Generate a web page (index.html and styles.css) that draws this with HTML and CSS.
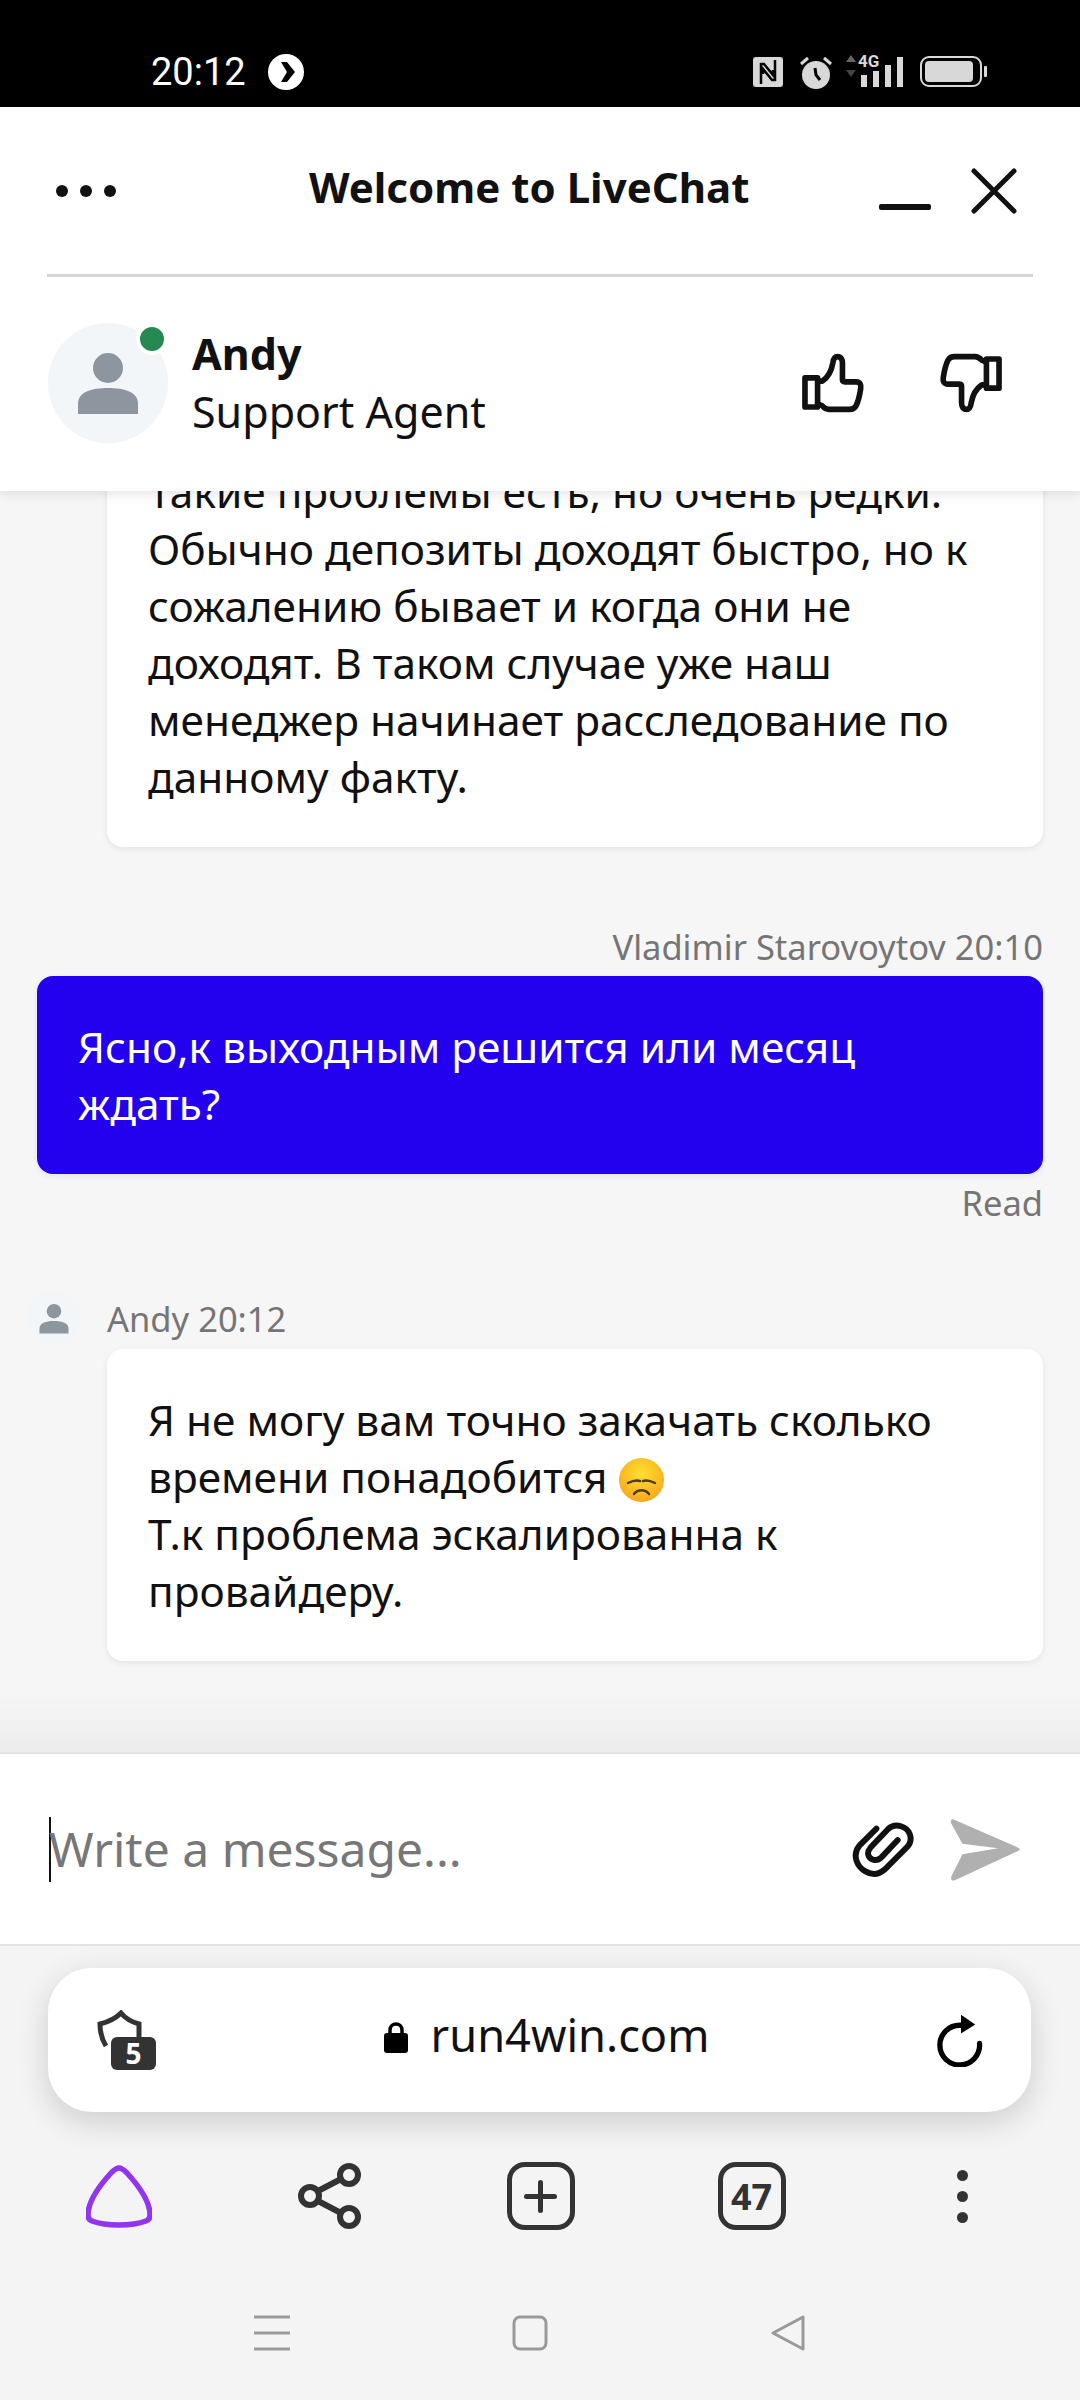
FILE: index.html
```html
<!DOCTYPE html>
<html lang="ru">
<head>
  <meta charset="UTF-8">
  <meta name="viewport" content="width=device-width, initial-scale=1.0">
  <title>LiveChat</title>
  <link rel="stylesheet" href="styles.css">
</head>
<body>

  <div class="status-bar">
    <div class="status-left">
      <span class="status-time">20:12</span>
      <svg class="status-arrow" width="36" height="36" viewBox="0 0 36 36">
        <circle cx="18" cy="18" r="18" fill="#fff"/>
        <path d="M13 8h6l8 10-8 10h-6l6-10z" fill="#000"/>
      </svg>
    </div>
    <div class="status-right">
      <svg width="30" height="30" viewBox="0 0 30 30">
        <rect width="30" height="30" rx="3" fill="#d8d8d8"/>
        <path d="M8 27V7h3l9 11v-5M22 3v20h-3l-9-11v5" fill="none" stroke="#000" stroke-width="2.500"/>
      </svg>
      <svg width="32" height="34" viewBox="0 0 32 34">
        <circle cx="16" cy="20" r="14" fill="#d8d8d8"/>
        <path d="M1 9l7-6M31 9l-7-6" stroke="#d8d8d8" stroke-width="3"/>
        <path d="M15 13l1 7 4 5" fill="none" stroke="#000" stroke-width="3"/>
      </svg>
      <div class="signal">
        <svg class="signal-arrows" width="12" height="24" viewBox="0 0 12 24">
          <path d="M6 0l5 7H1z" fill="#666"/>
          <path d="M6 22L1 15h10z" fill="#444"/>
        </svg>
        <span class="signal-type">4G</span>
        <svg class="signal-bars" width="42" height="30" viewBox="0 0 42 30">
          <rect x="0" y="18" width="6" height="12" fill="#d8d8d8"/>
          <rect x="12" y="14" width="6" height="16" fill="#d8d8d8"/>
          <rect x="24" y="8" width="6" height="22" fill="#d8d8d8"/>
          <rect x="36" y="0" width="6" height="30" fill="#d8d8d8"/>
        </svg>
      </div>
      <svg width="67" height="31" viewBox="0 0 67 31">
        <rect x="1" y="1" width="60" height="29" rx="8" fill="none" stroke="#d8d8d8" stroke-width="2"/>
        <rect x="5" y="5" width="48" height="21" rx="4" fill="#d8d8d8"/>
        <rect x="64" y="10" width="3" height="11" rx="1" fill="#d8d8d8"/>
      </svg>
    </div>
  </div>

  <header class="chat-header">
    <div class="title-row">
      <div class="more-dots"><span></span><span></span><span></span></div>
      <h1>Welcome to LiveChat</h1>
      <div class="window-btns">
        <span class="minimize"></span>
        <svg width="46" height="46" viewBox="0 0 46 46">
          <path d="M3 3l40 40M43 3L3 43" stroke="#111" stroke-width="5" stroke-linecap="round"/>
        </svg>
      </div>
    </div>
    <div class="agent-row">
      <div class="avatar">
        <svg width="62" height="62" viewBox="0 0 62 62">
          <ellipse cx="31" cy="16" rx="15" ry="15" fill="#8d969e"/>
          <path d="M1 62V52C1 40 14 36 31 36s30 4 30 16v10z" fill="#8d969e"/>
        </svg>
        <span class="online-dot"></span>
      </div>
      <div class="agent-info">
        <div class="agent-name">Andy</div>
        <div class="agent-role">Support Agent</div>
      </div>
      <div class="rate-btns">
        <svg width="68" height="62" viewBox="115 95 205 185">
          <g fill="none" stroke="#111" stroke-width="17" stroke-linejoin="round">
            <rect x="133" y="172" width="38" height="88"/>
            <path d="M171 182h14c15-10 28-32 32-55 2-14 8-19 14-19 10 0 15 8 15 20v50c0 4 3 6 8 6h33c12 0 16 8 14 20-3 20-7 38-14 52-4 8-10 11-20 11h-62c-8 0-14-4-20-11l-14-6"/>
          </g>
        </svg>
        <svg width="68" height="62" viewBox="115 95 205 185">
          <g fill="none" stroke="#111" stroke-width="17" stroke-linejoin="round" transform="rotate(180 217.500 187.500)">
            <rect x="133" y="172" width="38" height="88"/>
            <path d="M171 182h14c15-10 28-32 32-55 2-14 8-19 14-19 10 0 15 8 15 20v50c0 4 3 6 8 6h33c12 0 16 8 14 20-3 20-7 38-14 52-4 8-10 11-20 11h-62c-8 0-14-4-20-11l-14-6"/>
          </g>
        </svg>
      </div>
    </div>
  </header>

  <main class="chat">
    <div class="bubble bubble-in">
      Такие проблемы есть, но очень редки.<br>
      Обычно депозиты доходят быстро, но к сожалению бывает и когда они не доходят. В таком случае уже наш менеджер начинает расследование по данному факту.
    </div>

    <div class="msg-meta meta-out">Vladimir Starovoytov 20:10</div>
    <div class="bubble bubble-out">Ясно,к выходным решится или месяц ждать?</div>
    <div class="msg-read">Read</div>

    <div class="msg-author">
      <div class="mini-avatar">
        <svg width="30" height="31" viewBox="0 0 62 62">
          <ellipse cx="31" cy="16" rx="15" ry="15" fill="#8d969e"/>
          <path d="M1 62V52C1 40 14 36 31 36s30 4 30 16v10z" fill="#8d969e"/>
        </svg>
      </div>
      <span class="msg-meta">Andy 20:12</span>
    </div>
    <div class="bubble bubble-in">
      Я не могу вам точно закачать сколько времени понадобится
      <svg class="emoji" width="45" height="44" viewBox="0 0 45 44">
        <defs>
          <radialGradient id="emojiFace" cx="50%" cy="35%" r="65%">
            <stop offset="0%" stop-color="#fde02f"/>
            <stop offset="100%" stop-color="#f7a81e"/>
          </radialGradient>
        </defs>
        <ellipse cx="22.500" cy="22" rx="22.500" ry="22" fill="url(#emojiFace)"/>
        <path d="M9 25c4-2 9-3 12-2M24 23c3-1 8 0 12 2M15 36c4-5 11-5 15 0" fill="none" stroke="#4e3a1e" stroke-width="2.400" stroke-linecap="round"/>
      </svg><br>
      Т.к проблема эскалированна к провайдеру.
    </div>
  </main>

  <div class="composer">
    <span class="caret"></span>
    <span class="placeholder">Write a message...</span>
    <svg class="clip" width="66" height="58" viewBox="30 50 200 177">
      <path d="M110 70L58 122C35 150 50 185 75 200 100 215 120 208 135 195L205 125C225 100 210 70 185 63 170 58 155 62 145 72L92 128C78 145 85 160 100 165 110 168 118 165 125 158L175 105" fill="none" stroke="#111" stroke-width="18" stroke-linecap="round"/>
    </svg>
    <svg width="72" height="65" viewBox="328 38 215 195">
      <path d="M340 45L535 130Q545 135 535 140L345 228Q330 232 335 215L368 150 475 132 368 118 333 55Q332 42 340 45z" fill="#b0b0b0"/>
    </svg>
  </div>

  <div class="browser">
    <div class="url-bar">
      <div class="shield">
        <svg width="48" height="40" viewBox="0 0 48 40">
          <path d="M10 36C5 28 4 20 4 14 12 12 20 8 25 3 29 8 36 12 43 14v14" fill="none" stroke="#333" stroke-width="5"/>
        </svg>
        <span class="shield-count">5</span>
      </div>
      <div class="url-text">
        <svg width="24" height="31" viewBox="0 0 24 31">
          <path d="M6 13V8c0-8 12-8 12 0v5" fill="none" stroke="#000" stroke-width="3.500"/>
          <rect y="11" width="24" height="20" rx="3"/>
        </svg>
        <span class="url-host">run4win.com</span>
      </div>
      <svg width="46" height="53" viewBox="50 38 138 160">
        <path d="M178 127A60 60 0 1 1 120 72" fill="none" stroke="#000" stroke-width="16" stroke-linecap="round"/>
        <path d="M122 40L165 70 122 97z" fill="#000"/>
      </svg>
    </div>

    <div class="toolbar">
      <div class="tool-cell">
        <svg width="66" height="63" viewBox="0 0 66 63">
          <path d="M33 3c3 0 5 2 8 5C52 20 64 37 64 50c0 3-1 5-4 6-8 3-17 4-27 4S14 59 6 56c-3-1-4-3-4-6C2 37 14 20 25 8c3-3 5-5 8-5z" fill="none" stroke="#9334f0" stroke-width="5.500" stroke-linejoin="round"/>
        </svg>
      </div>
      <div class="tool-cell">
        <svg width="64" height="66" viewBox="0 0 64 66">
          <g fill="none" stroke="#333" stroke-width="6">
            <circle cx="51" cy="12" r="9"/>
            <circle cx="12" cy="33" r="9"/>
            <circle cx="51" cy="54" r="9"/>
            <path d="M20 28l23-12M20 38l23 12"/>
          </g>
        </svg>
      </div>
      <div class="tool-cell">
        <div class="tool-box"><span class="tool-plus"></span></div>
      </div>
      <div class="tool-cell">
        <div class="tool-box">47</div>
      </div>
      <div class="tool-cell">
        <div class="tool-dots"><span></span><span></span><span></span></div>
      </div>
    </div>

    <nav class="nav-bar">
      <svg width="36" height="36" viewBox="0 0 36 36">
        <path d="M0 2h36M0 18h36M0 34h36" stroke="#999" stroke-width="3"/>
      </svg>
      <svg width="36" height="36" viewBox="0 0 36 36">
        <rect x="2" y="2" width="32" height="32" rx="6" fill="none" stroke="#999" stroke-width="3"/>
      </svg>
      <svg width="36" height="36" viewBox="0 0 36 36">
        <path d="M33 2v32L3 18z" fill="none" stroke="#999" stroke-width="3" stroke-linejoin="round"/>
      </svg>
    </nav>
  </div>

</body>
</html>
```

FILE: styles.css
```css
* {
  box-sizing: border-box;
  margin: 0;
  padding: 0;
}

body {
  width: 1080px;
  height: 2400px;
  display: flex;
  flex-direction: column;
  overflow: hidden;
  font-family: 'Noto Sans', sans-serif;
  color: #111;
  background-color: #f4f4f4;
}

/* Phone status bar */
.status-bar {
  height: 107px;
  flex: none;
  display: flex;
  justify-content: space-between;
  align-items: center;
  padding: 36px 93px 0 151px;
  background-color: #000;
  color: #fff;
}

.status-left {
  display: flex;
  align-items: center;
  gap: 22px;
}

.status-time {
  font-family: 'Roboto', sans-serif;
  font-size: 38px;
}

.status-right {
  display: flex;
  align-items: center;
  gap: 17px;
}

.signal {
  position: relative;
  width: 58px;
  height: 34px;
  margin-left: -4px;
}

.signal-arrows {
  position: absolute;
  left: 0;
  top: 0;
}

.signal-type {
  position: absolute;
  left: 13px;
  top: -4px;
  font-family: 'Roboto', sans-serif;
  font-size: 17px;
  font-weight: bold;
  color: #d8d8d8;
}

.signal-bars {
  position: absolute;
  left: 16px;
  top: 2px;
}

/* Chat header */
.chat-header {
  flex: none;
  height: 384px;
  position: relative;
  z-index: 2;
  padding: 0 47px;
  background-color: #fff;
  box-shadow: 0 2px 12px rgba(0, 0, 0, 0.12);
}

.title-row {
  height: 170px;
  display: flex;
  align-items: center;
  justify-content: space-between;
  border-bottom: 3px solid #d5d5d5;
}

.title-row h1 {
  position: absolute;
  left: 309px;
  margin-bottom: 8px;
  font-size: 42px;
  font-weight: bold;
}

.more-dots {
  display: flex;
  gap: 12px;
  margin-left: 9px;
}

.more-dots span {
  width: 12px;
  height: 12px;
  border-radius: 50%;
  background-color: #111;
}

.window-btns {
  display: flex;
  align-items: center;
  gap: 40px;
  margin-right: 16px;
}

.minimize {
  width: 52px;
  height: 6px;
  margin-top: 32px;
  border-radius: 2px;
  background-color: #111;
}

.agent-row {
  display: flex;
  align-items: center;
  height: 212px;
  padding-left: 1px;
}

.avatar {
  position: relative;
  width: 120px;
  height: 120px;
  display: flex;
  align-items: center;
  justify-content: center;
  border-radius: 50%;
  background-color: #f2f6f9;
}

.online-dot {
  position: absolute;
  top: 0;
  right: 0;
  width: 32px;
  height: 32px;
  border: 4px solid #fff;
  border-radius: 50%;
  background-color: #248a52;
}

.agent-info {
  flex: 1;
  margin-left: 24px;
}

.agent-name {
  font-size: 43px;
  font-weight: bold;
  line-height: 58px;
}

.agent-role {
  font-size: 43px;
  line-height: 58px;
}

.rate-btns {
  display: flex;
  gap: 70px;
  margin-right: 28px;
}

/* Messages */
.chat {
  flex: 1;
  min-height: 0;
  position: relative;
  display: flex;
  flex-direction: column;
  justify-content: flex-end;
  overflow: hidden;
  padding: 0 37px 91px;
  background-color: #f6f6f6;
}

.chat::after {
  content: "";
  position: absolute;
  left: 0;
  right: 0;
  bottom: 0;
  height: 60px;
  background: linear-gradient(rgba(0, 0, 0, 0), rgba(0, 0, 0, 0.04));
}

.bubble {
  flex: none;
  padding: 42px 42px 42px 41px;
  font-size: 42.4px;
  line-height: 57px;
  border-radius: 16px;
  box-shadow: 0 2px 6px rgba(0, 0, 0, 0.08);
}

.bubble-in {
  margin-left: 70px;
  background-color: #fff;
}

.bubble-out {
  color: #fff;
  background-color: #2300ee;
}

.msg-meta {
  font-size: 34.5px;
  line-height: 46px;
  color: #757575;
}

.meta-out {
  flex: none;
  margin-top: 77px;
  margin-bottom: 6px;
  text-align: right;
}

.msg-read {
  flex: none;
  margin-top: 6px;
  font-size: 34.5px;
  line-height: 46px;
  text-align: right;
  color: #757575;
}

.msg-author {
  flex: none;
  display: flex;
  align-items: center;
  margin: 65px 0 4px -10px;
}

.msg-author .msg-meta {
  margin-top: 2px;
}

.mini-avatar {
  width: 54px;
  height: 54px;
  margin-right: 26px;
  display: flex;
  align-items: center;
  justify-content: center;
  border-radius: 50%;
  background-color: #f2f6f9;
}

.emoji {
  vertical-align: -9px;
}

/* Message input */
.composer {
  flex: none;
  height: 194px;
  display: flex;
  align-items: center;
  padding: 0 59px 0 49px;
  background-color: #fff;
  border-top: 2px solid #e3e3e3;
  border-bottom: 2px solid #e3e3e3;
}

.caret {
  width: 2px;
  height: 65px;
  background-color: #111;
}

.placeholder {
  flex: 1;
  margin-left: -2px;
  margin-bottom: 2px;
  font-size: 48px;
  color: #777;
}

.clip {
  margin-top: 3px;
  margin-right: 33px;
}

/* Browser chrome */
.browser {
  flex: none;
  height: 454px;
  padding: 22px 49px 0 48px;
}

.url-bar {
  height: 144px;
  display: flex;
  align-items: center;
  justify-content: space-between;
  padding: 0 48px;
  border-radius: 44px;
  background-color: #fff;
  box-shadow: 0 10px 32px rgba(0, 0, 0, 0.16);
}

.shield {
  position: relative;
  width: 60px;
  height: 60px;
}

.shield-count {
  position: absolute;
  right: 0;
  bottom: 0;
  width: 45px;
  height: 33px;
  border-radius: 6px;
  text-align: center;
  font-size: 28px;
  font-weight: bold;
  line-height: 33px;
  color: #fff;
  background-color: #333;
}

.url-text {
  display: flex;
  align-items: center;
  gap: 23px;
  margin-bottom: 6px;
  font-size: 45.2px;
  color: #111;
}

.url-host {
  margin-bottom: 6px;
}

.toolbar {
  height: 168px;
  display: grid;
  grid-template-columns: repeat(5, 211px);
  align-items: center;
  justify-items: center;
  margin-left: -35px;
}

.tool-cell {
  display: flex;
  align-items: center;
  justify-content: center;
}

.tool-box {
  width: 68px;
  height: 68px;
  display: flex;
  align-items: center;
  justify-content: center;
  border: 5px solid #333;
  border-radius: 18px;
  font-size: 36px;
  font-weight: bold;
  color: #333;
}

.tool-plus {
  position: relative;
  width: 33px;
  height: 5px;
  border-radius: 3px;
  background-color: #333;
}

.tool-plus::after {
  content: "";
  position: absolute;
  left: 14px;
  top: -14px;
  width: 5px;
  height: 33px;
  border-radius: 3px;
  background-color: #333;
}

.tool-dots {
  display: flex;
  flex-direction: column;
  gap: 10px;
}

.tool-dots span {
  width: 11px;
  height: 11px;
  border-radius: 50%;
  background-color: #333;
}

.nav-bar {
  display: flex;
  justify-content: center;
  gap: 222px;
  margin-top: 35px;
  padding-right: 19px;
}
```
